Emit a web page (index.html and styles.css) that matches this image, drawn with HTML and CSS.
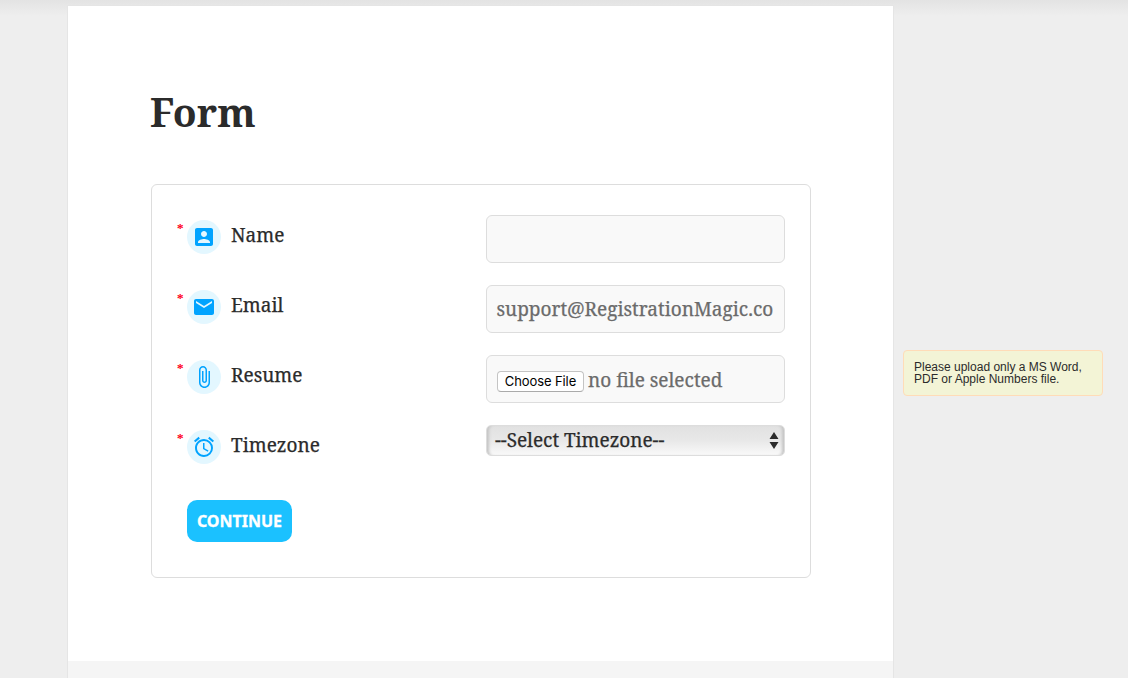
FILE: index.html
```
<!DOCTYPE html>
<html lang="en">
<head>
<meta charset="utf-8">
<title>Form</title>
<link rel="stylesheet" href="styles.css">
</head>
<body>
<div class="layout">
  <main class="page">
    <article class="entry">
      <h1 class="title">Form</h1>
      <form class="form">
        <div class="row">
          <sup class="req">*</sup>
          <span class="icon"><svg viewBox="0 0 24 24"><path d="M3 5v14c0 1.1.89 2 2 2h14c1.1 0 2-.9 2-2V5c0-1.1-.9-2-2-2H5c-1.11 0-2 .9-2 2zm12 4c0 1.66-1.34 3-3 3s-3-1.34-3-3 1.34-3 3-3 3 1.34 3 3zm-9 8c0-2 4-3.1 6-3.1s6 1.1 6 3.1v1H6v-1z"/></svg></span>
          <label class="label">Name</label>
          <div class="field"></div>
        </div>
        <div class="row">
          <sup class="req">*</sup>
          <span class="icon"><svg viewBox="0 0 24 24"><path d="M20 4H4c-1.1 0-1.99.9-1.99 2L2 18c0 1.1.9 2 2 2h16c1.1 0 2-.9 2-2V6c0-1.1-.9-2-2-2zm0 4l-8 5-8-5V6l8 5 8-5v2z"/></svg></span>
          <label class="label">Email</label>
          <div class="field"><span class="email">support@RegistrationMagic.co</span></div>
        </div>
        <div class="row">
          <sup class="req">*</sup>
          <span class="icon"><svg viewBox="0 0 24 24"><path d="M16.5 6v11.5c0 2.21-1.79 4-4 4s-4-1.79-4-4V5c0-1.38 1.12-2.500 2.500-2.500s2.500 1.120 2.500 2.500v10.500c0 .55-.45 1-1 1s-1-.45-1-1V6H10v9.500c0 1.380 1.120 2.500 2.500 2.500s2.500-1.120 2.500-2.500V5c0-2.210-1.790-4-4-4S7 2.790 7 5v12.500c0 3.040 2.460 5.500 5.500 5.500s5.500-2.460 5.500-5.500V6h-1.500z"/></svg></span>
          <label class="label">Resume</label>
          <div class="field"><span class="choose">Choose File</span><span class="nofile">no file selected</span></div>
        </div>
        <div class="row">
          <sup class="req">*</sup>
          <span class="icon"><svg viewBox="0 0 24 24"><path d="M22 5.720l-4.600-3.860-1.290 1.530 4.600 3.860L22 5.720zM7.880 3.390L6.600 1.860 2 5.710l1.290 1.530 4.590-3.850zM12.500 8H11v6l4.750 2.850.75-1.230-4-2.370V8zM12 4c-4.970 0-9 4.030-9 9s4.020 9 9 9a9 9 0 0 0 0-18zm0 16c-3.870 0-7-3.130-7-7s3.130-7 7-7 7 3.130 7 7-3.130 7-7 7z"/></svg></span>
          <label class="label">Timezone</label>
          <div class="select"><span class="zone">--Select Timezone--</span><svg class="arrows" viewBox="0 0 10 17"><path d="M.5 7L5 0l4.500 7zM.5 10h9L5 17z"/></svg></div>
        </div>
        <button class="continue" type="button">CONTINUE</button>
      </form>
    </article>
  </main>
  <aside class="note">Please upload only a MS Word,<br>PDF or Apple Numbers file.</aside>
</div>
</body>
</html>
```
FILE: styles.css
```
* { box-sizing: border-box; }
body {
  margin: 0;
  height: 678px;
  overflow: hidden;
  background: linear-gradient(#e3e3e3, #eee 16px);
  color: #2b2b2b;
  font-family: "Noto Serif", "Droid Serif", "DejaVu Serif", serif;
}
.layout { display: flex; align-items: flex-start; padding: 5px 0 0 67px; }
.page {
  width: 827px;
  height: 673px;
  border: 1px solid #e5e5e5;
  border-bottom: 0;
  background: #f5f5f5;
}
.entry { height: 655px; padding: 77px 82px 0 83px; background: #fff; }
.title { margin: 0 0 0 -1px; height: 101px; font-size: 39px; line-height: 58px; font-weight: bold; letter-spacing: .1px; white-space: nowrap; }
.form {
  height: 394px;
  padding: 30px 25px 0 25px;
  border: 1px solid #ddd;
  border-radius: 6px;
}
.row { display: flex; align-items: flex-start; height: 70px; }
.req { width: 10px; height: 26px; padding-top: 4px; font-size: 13px; line-height: 20px; font-weight: bold; color: #ff0020; }
.icon { display: flex; align-items: center; justify-content: center; width: 34px; height: 34px; margin-top: 5px; border-radius: 50%; background: #e3f7ff; }
.icon svg { width: 24px; height: 24px; fill: #00a3ff; }
.label { width: 255px; margin-left: 10px; font-size: 19px; line-height: 40px; white-space: nowrap; }
.label, .email, .nofile, .zone { -webkit-text-stroke: .25px currentColor; }
.field {
  display: flex;
  align-items: center;
  width: 299px;
  height: 48px;
  padding: 0 10px;
  border: 1px solid #ddd;
  border-radius: 6px;
  background: #f9f9f9;
  color: #6b6b6b;
  font-size: 19px;
  white-space: nowrap;
}
.email { margin-left: -.5px; }
.choose {
  width: 87px;
  height: 21px;
  margin-top: 5px;
  border: 1px solid #c4c4c4;
  border-bottom-color: #aaa;
  border-radius: 4px;
  background: #fff;
  color: #000;
  font: 13px/19px Inter, sans-serif;
  text-align: center;
  letter-spacing: -.1px;
}
.nofile { margin: 2px 0 0 4px; }
.select {
  display: flex;
  align-items: center;
  justify-content: space-between;
  width: 299px;
  height: 31px;
  padding: 0 5px 0 8px;
  border: 1px solid #ddd;
  border-radius: 5px;
  background: linear-gradient(#e1e1e1, #e8e8e8 50%, #f9f9f9);
  box-shadow: inset 4px 0 3px -2px #c4c4c4, inset -4px 0 3px -2px #c4c4c4;
  font-size: 19px;
  line-height: 28px;
  white-space: nowrap;
}
.zone { padding-bottom: 2px; letter-spacing: -.04px; }
.arrows { width: 10px; height: 17px; fill: #2b2b2b; }
.continue {
  display: block;
  width: 105px;
  height: 42px;
  margin: 5px 0 0 10px;
  padding: 0;
  border: 0;
  border-radius: 10px;
  background: #1bc1ff;
  color: #fff;
  font: bold 16px/42px "Noto Sans", sans-serif;
  -webkit-text-stroke: .3px #fff;
  white-space: nowrap;
}
.note {
  width: 200px;
  height: 46px;
  margin: 345px 0 0 9px;
  padding: 10px 10px 0;
  border: 1px solid #ffdcb8;
  border-radius: 4px;
  background: #f3f4d6;
  font: 12px/12px "Liberation Sans", Arial, sans-serif;
  white-space: nowrap;
}
```
